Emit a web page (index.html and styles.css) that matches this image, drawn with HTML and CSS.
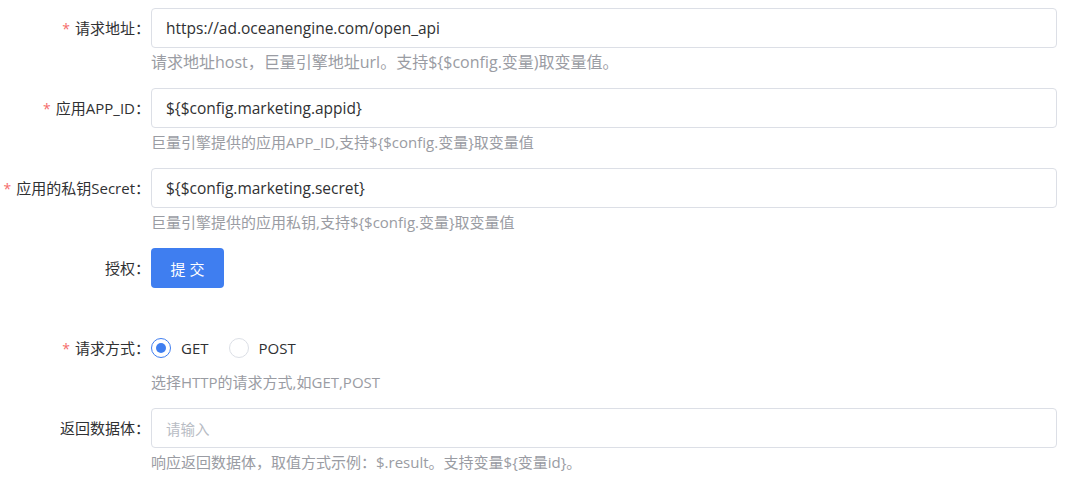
FILE: index.html
```html
<!DOCTYPE html>
<html lang="zh-CN">
<head>
<meta charset="utf-8">
<link rel="stylesheet" href="styles.css">
</head>
<body>
<form class="form">
  <div class="item">
    <label class="label"><span class="star">*</span>请求地址：</label>
    <div class="content">
      <div class="input"><span class="value">https://ad.oceanengine.com/open_api</span></div>
      <div class="help help-lg">请求地址host，巨量引擎地址url。支持${$config.变量)取变量值。</div>
    </div>
  </div>
  <div class="item">
    <label class="label"><span class="star">*</span>应用APP_ID：</label>
    <div class="content">
      <div class="input"><span class="value">${$config.marketing.appid}</span></div>
      <div class="help">巨量引擎提供的应用APP_ID,支持${$config.变量}取变量值</div>
    </div>
  </div>
  <div class="item">
    <label class="label"><span class="star">*</span>应用的私钥Secret：</label>
    <div class="content">
      <div class="input"><span class="value">${$config.marketing.secret}</span></div>
      <div class="help">巨量引擎提供的应用私钥,支持${$config.变量}取变量值</div>
    </div>
  </div>
  <div class="item">
    <label class="label">授权：</label>
    <div class="content">
      <button type="button" class="btn">提 交</button>
    </div>
  </div>
  <div class="item">
    <label class="label"><span class="star">*</span>请求方式：</label>
    <div class="content">
      <div class="radios">
        <span class="radio checked"><span class="circle"></span><span class="rtext">GET</span></span>
        <span class="radio"><span class="circle"></span><span class="rtext">POST</span></span>
      </div>
      <div class="help">选择HTTP的请求方式,如GET,POST</div>
    </div>
  </div>
  <div class="item">
    <label class="label">返回数据体：</label>
    <div class="content">
      <div class="input"><span class="placeholder">请输入</span></div>
      <div class="help">响应返回数据体，取值方式示例：$.result。支持变量${变量id}。</div>
    </div>
  </div>
</form>
</body>
</html>
```
FILE: styles.css
```css
html, body {
  margin: 0;
  padding: 0;
  background: #ffffff;
}
body {
  font-family: "Open Sans", "Noto Sans CJK SC", sans-serif;
  font-size: 14px;
  color: #606266;
}
.form {
  padding: 8px 30px 0 0;
  display: flex;
  flex-direction: column;
}
.item {
  display: flex;
  height: 80px;
}
.label {
  width: 151px;
  box-sizing: border-box;
  padding-right: 1px;
  text-align: right;
  line-height: 40px;
  height: 40px;
  font-size: 15px;
  color: #303133;
  white-space: nowrap;
  flex: none;
}
.star {
  color: #f56c6c;
  margin-right: 5px;
  font-size: 14px;
}
.content {
  flex: 1;
  display: flex;
  flex-direction: column;
}
.input {
  height: 40px;
  box-sizing: border-box;
  border: 1px solid #dcdfe6;
  border-radius: 4px;
  padding: 0 14px;
  display: flex;
  align-items: center;
  font-size: 15.5px;
  color: #303133;
}
.placeholder {
  color: #b8bcc4;
  font-size: 14.5px;
}
.help {
  margin-top: 4px;
  line-height: 20px;
  font-size: 15px;
  color: #9a9ca3;
  white-space: nowrap;
}
.help-lg {
  font-size: 16px;
}
.btn {
  width: 73px;
  height: 40px;
  border: none;
  border-radius: 4px;
  background: #3f7ef0;
  color: #ffffff;
  font-family: "Open Sans", "Noto Sans CJK SC", sans-serif;
  font-size: 15px;
  padding: 0;
  cursor: pointer;
}
.radios {
  height: 40px;
  display: flex;
  align-items: center;
  gap: 10px;
}
.radio {
  display: flex;
  align-items: center;
  gap: 10px;
  margin-right: 10px;
  font-size: 15px;
  color: #303133;
}
.circle {
  width: 20px;
  height: 20px;
  box-sizing: border-box;
  border: 1px solid #dcdfe6;
  border-radius: 50%;
  display: flex;
  align-items: center;
  justify-content: center;
}
.radio.checked .circle {
  border-color: #3f7ef0;
}
.radio.checked .circle::after {
  content: "";
  width: 10px;
  height: 10px;
  border-radius: 50%;
  background: #3f7ef0;
}
```
